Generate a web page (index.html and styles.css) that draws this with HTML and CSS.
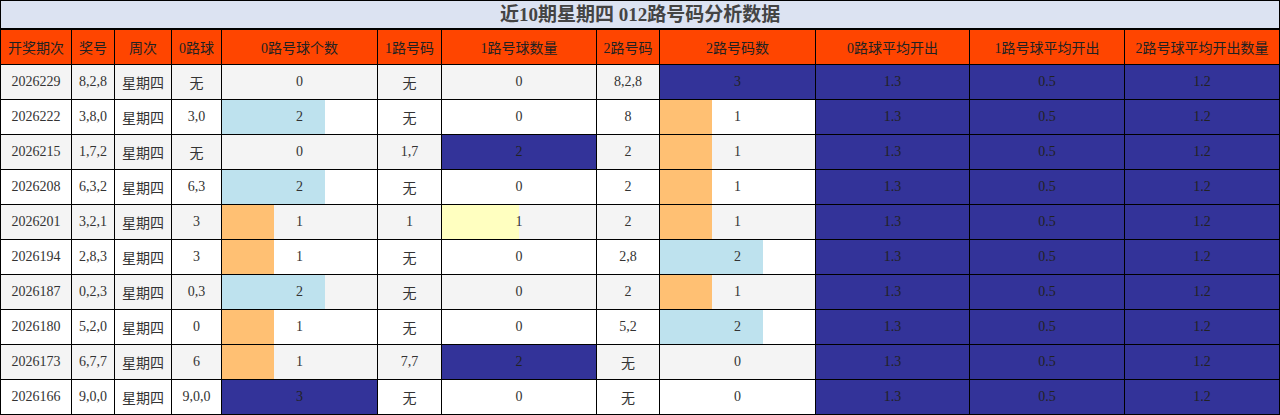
FILE: index.html
```html
<!DOCTYPE html>
<html lang="zh">
<head>
<meta charset="utf-8">
<title>近10期星期四 012路号码分析数据</title>
<link rel="stylesheet" href="styles.css">
</head>
<body>
<table class="data">
  <colgroup>
    <col class="c71"><col class="c43"><col class="c57"><col class="c50"><col class="c156"><col class="c64"><col class="c155"><col class="c63"><col class="c156"><col class="c154"><col class="c155"><col class="c155">
  </colgroup>
  <thead>
    <tr class="title-row"><th colspan="12">近10期星期四 012路号码分析数据</th></tr>
    <tr class="head-row">
      <th>开奖期次</th><th>奖号</th><th>周次</th><th>0路球</th><th>0路号球个数</th><th>1路号码</th><th>1路号球数量</th><th>2路号码</th><th>2路号码数</th><th>0路球平均开出</th><th>1路号球平均开出</th><th>2路号球平均开出数量</th>
    </tr>
  </thead>
  <tbody>
    <tr><td>2026229</td><td>8,2,8</td><td>星期四</td><td>无</td><td>0</td><td>无</td><td>0</td><td>8,2,8</td><td class="dark">3</td><td class="dark">1.3</td><td class="dark">0.5</td><td class="dark">1.2</td></tr>
    <tr><td>2026222</td><td>3,8,0</td><td>星期四</td><td>3,0</td><td class="bar blue" style="--w:66.7%">2</td><td>无</td><td>0</td><td>8</td><td class="bar orange" style="--w:33.3%">1</td><td class="dark">1.3</td><td class="dark">0.5</td><td class="dark">1.2</td></tr>
    <tr><td>2026215</td><td>1,7,2</td><td>星期四</td><td>无</td><td>0</td><td>1,7</td><td class="dark">2</td><td>2</td><td class="bar orange" style="--w:33.3%">1</td><td class="dark">1.3</td><td class="dark">0.5</td><td class="dark">1.2</td></tr>
    <tr><td>2026208</td><td>6,3,2</td><td>星期四</td><td>6,3</td><td class="bar blue" style="--w:66.7%">2</td><td>无</td><td>0</td><td>2</td><td class="bar orange" style="--w:33.3%">1</td><td class="dark">1.3</td><td class="dark">0.5</td><td class="dark">1.2</td></tr>
    <tr><td>2026201</td><td>3,2,1</td><td>星期四</td><td>3</td><td class="bar orange" style="--w:33.3%">1</td><td>1</td><td class="bar yellow" style="--w:50%">1</td><td>2</td><td class="bar orange" style="--w:33.3%">1</td><td class="dark">1.3</td><td class="dark">0.5</td><td class="dark">1.2</td></tr>
    <tr><td>2026194</td><td>2,8,3</td><td>星期四</td><td>3</td><td class="bar orange" style="--w:33.3%">1</td><td>无</td><td>0</td><td>2,8</td><td class="bar blue" style="--w:66.7%">2</td><td class="dark">1.3</td><td class="dark">0.5</td><td class="dark">1.2</td></tr>
    <tr><td>2026187</td><td>0,2,3</td><td>星期四</td><td>0,3</td><td class="bar blue" style="--w:66.7%">2</td><td>无</td><td>0</td><td>2</td><td class="bar orange" style="--w:33.3%">1</td><td class="dark">1.3</td><td class="dark">0.5</td><td class="dark">1.2</td></tr>
    <tr><td>2026180</td><td>5,2,0</td><td>星期四</td><td>0</td><td class="bar orange" style="--w:33.3%">1</td><td>无</td><td>0</td><td>5,2</td><td class="bar blue" style="--w:66.7%">2</td><td class="dark">1.3</td><td class="dark">0.5</td><td class="dark">1.2</td></tr>
    <tr><td>2026173</td><td>6,7,7</td><td>星期四</td><td>6</td><td class="bar orange" style="--w:33.3%">1</td><td>7,7</td><td class="dark">2</td><td>无</td><td>0</td><td class="dark">1.3</td><td class="dark">0.5</td><td class="dark">1.2</td></tr>
    <tr><td>2026166</td><td>9,0,0</td><td>星期四</td><td>9,0,0</td><td class="dark">3</td><td>无</td><td>0</td><td>无</td><td>0</td><td class="dark">1.3</td><td class="dark">0.5</td><td class="dark">1.2</td></tr>
  </tbody>
</table>
</body>
</html>
```

FILE: styles.css
```css
html, body {
  margin: 0;
  padding: 0;
  background: #ffffff;
}

.data {
  width: 1280px;
  border-collapse: collapse;
  table-layout: fixed;
  font-family: "Liberation Serif", "Noto Sans CJK SC", serif;
  font-size: 14px;
  color: #333333;
}

.c71 { width: 71px; }
.c43 { width: 43px; }
.c57 { width: 57px; }
.c50 { width: 50px; }
.c156 { width: 156px; }
.c64 { width: 64px; }
.c155 { width: 155px; }
.c63 { width: 63px; }
.c154 { width: 154px; }

.data th,
.data td {
  border: 1px solid #000000;
  padding: 0;
  text-align: center;
  white-space: nowrap;
  overflow: hidden;
}

.title-row th {
  height: 27px;
  background: #dce3f2;
  color: #444444;
  font-size: 19px;
  line-height: 24px;
  font-weight: bold;
  border-bottom-width: 2px;
}

.head-row th {
  height: 34px;
  background: #ff4500;
  color: #222222;
  font-weight: normal;
  font-size: 14px;
}

.data td {
  height: 34px;
}

.data tbody tr:nth-child(odd) td {
  background-color: #f4f4f4;
}

.data tbody tr:nth-child(even) td {
  background-color: #ffffff;
}

.data tbody tr td.dark {
  background: #333399;
  color: #222222;
}

.data tbody tr td.bar {
  background-repeat: no-repeat;
}

.data tbody tr td.orange {
  background-image: linear-gradient(to right, #ffc073 var(--w), transparent var(--w));
}

.data tbody tr td.blue {
  background-image: linear-gradient(to right, #bee2ee var(--w), transparent var(--w));
}

.data tbody tr td.yellow {
  background-image: linear-gradient(to right, #ffffc0 var(--w), transparent var(--w));
}
```
